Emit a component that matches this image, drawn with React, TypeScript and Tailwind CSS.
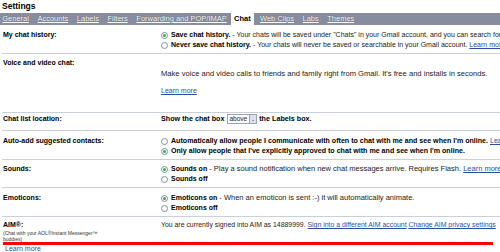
import React from "react";

const Radio = ({ on }: { on?: boolean }) => (
  <span className="inline-flex items-center justify-center w-[7px] h-[7px] rounded-full border border-[#7d8fa6] bg-white mr-[3px] shrink-0">
    {on && <span className="w-[3px] h-[3px] rounded-full bg-[#27b33a]" />}
  </span>
);

const Link = ({ children }: { children: React.ReactNode }) => (
  <span className="text-[#2b4f9e] underline">{children}</span>
);

const Divider = () => <div className="h-px bg-[#c9d0dc] ml-[2px]" />;

const Label = ({ children }: { children: React.ReactNode }) => (
  <div className="w-[158px] shrink-0 pl-[3px] font-bold text-black text-[7px]">{children}</div>
);

export default function App() {
  const tabs = ["General", "Accounts", "Labels", "Filters", "Forwarding and POP/IMAP", "Chat", "Web Clips", "Labs", "Themes"];
  return (
    <div
      className="w-[500px] h-[252px] overflow-hidden bg-white text-[7px] leading-[10px] text-[#222] whitespace-nowrap"
      style={{ fontFamily: '"Liberation Sans", Arial, sans-serif' }}
    >
      <div className="h-[13px] pl-[2px] pt-[1px] text-[8.5px] leading-[11px] font-bold text-black">Settings</div>
      <div className="h-[12px] bg-[#878c9f] flex items-stretch pl-0 -ml-[2px]">
        {tabs.map((t) =>
          t === "Chat" ? (
            <div key={t} className="bg-white px-[3.5px] ml-[-0.5px] mr-[1.5px] flex items-center font-bold text-black text-[7.5px]">
              {t}
            </div>
          ) : (
            <div
              key={t}
              className="px-[4.25px] flex items-center text-white underline text-[7.5px]"
              style={{ textShadow: "0 0 1px #3a3d4a" }}
            >
              {t}
            </div>
          )
        )}
      </div>

      {/* My chat history */}
      <div className="flex pt-[5px] pb-[3px]">
        <Label>My chat history:</Label>
        <div className="pl-[3px]">
          <div className="flex items-center">
            <Radio on />
            <span className="font-bold text-black">Save chat history.</span>
            <span>&nbsp;- Your chats will be saved under "Chats" in your Gmail account, and you can search for them</span>
          </div>
          <div className="flex items-center">
            <Radio />
            <span className="font-bold text-black">Never save chat history.</span>
            <span>&nbsp;- Your chats will never be saved or searchable in your Gmail account.&nbsp;</span>
            <Link>Learn more</Link>
          </div>
        </div>
      </div>
      <Divider />

      {/* Voice and video */}
      <div className="flex pt-[4px] pb-[16px]">
        <Label>Voice and video chat:</Label>
        <div className="pl-[3px] pt-[11px] text-[7.6px]">
          <div>Make voice and video calls to friends and family right from Gmail. It's free and installs in seconds.</div>
          <div className="pt-[7px] text-[7px]">
            <Link>Learn more</Link>
          </div>
        </div>
      </div>
      <Divider />

      {/* Chat list location */}
      <div className="flex pt-[1px] pb-[6px]">
        <Label>Chat list location:</Label>
        <div className="pl-[3px] flex items-center font-bold text-black text-[7.2px]">
          <span>Show the chat box&nbsp;</span>
          <span className="inline-flex items-center h-[10px] border border-[#9aa3b3] bg-white font-normal text-[6.5px] leading-[8px] text-[#222]">
            <span className="px-[2px]">above</span>
            <span className="w-[7px] h-[8px] bg-[#dde3ee] border-l border-[#9aa3b3] flex items-center justify-center text-[5px] text-[#334]">
              ⌄
            </span>
          </span>
          <span>&nbsp;the Labels box.</span>
        </div>
      </div>
      <Divider />

      {/* Auto-add */}
      <div className="flex pt-[5px] pb-[3px]">
        <Label>Auto-add suggested contacts:</Label>
        <div className="pl-[3px] font-bold text-black text-[7.1px]">
          <div className="flex items-center">
            <Radio />
            <span>Automatically allow people I communicate with often to chat with me and see when I'm online.&nbsp;</span>
            <span className="font-normal">
              <Link>Learn more</Link>
            </span>
          </div>
          <div className="flex items-center">
            <Radio on />
            <span>Only allow people that I've explicitly approved to chat with me and see when I'm online.</span>
          </div>
        </div>
      </div>
      <Divider />

      {/* Sounds */}
      <div className="flex pt-[4px] pb-[3px]">
        <Label>Sounds:</Label>
        <div className="pl-[3px]">
          <div className="flex items-center">
            <Radio on />
            <span className="font-bold text-black">Sounds on</span>
            <span className="text-[7.5px]">&nbsp;- Play a sound notification when new chat messages arrive. Requires Flash.&nbsp;</span>
            <span className="text-[7.5px]">
              <Link>Learn more</Link>
            </span>
          </div>
          <div className="flex items-center">
            <Radio />
            <span className="font-bold text-black">Sounds off</span>
          </div>
        </div>
      </div>
      <Divider />

      {/* Emoticons */}
      <div className="flex pt-[5px] pb-[3px]">
        <Label>Emoticons:</Label>
        <div className="pl-[3px]">
          <div className="flex items-center">
            <Radio on />
            <span className="font-bold text-black">Emoticons on</span>
            <span className="text-[7.5px]">&nbsp;- When an emoticon is sent :-) it will automatically animate.</span>
          </div>
          <div className="flex items-center">
            <Radio />
            <span className="font-bold text-black">Emoticons off</span>
          </div>
        </div>
      </div>
      <Divider />

      {/* AIM */}
      <div className="flex pt-[3px]">
        <div className="w-[158px] shrink-0 pl-[3px]">
          <div className="font-bold text-black">AIM®:</div>
          <div className="text-[5px] leading-[6px] text-[#333]">
            (Chat with your AOL®Instant Messenger™
            <br />
            buddies)
          </div>
        </div>
        <div className="pl-[3px] text-[6.9px]">
          You are currently signed into AIM as 14889999. <Link>Sign into a different AIM account</Link>{" "}
          <Link>Change AIM privacy settings</Link>
        </div>
      </div>
      <div className="h-[3px] bg-[#ff0000] ml-[3px] w-[490px]" />
      <div className="pl-[5px] leading-[7px]">
        <Link>Learn more</Link>
      </div>
    </div>
  );
}
